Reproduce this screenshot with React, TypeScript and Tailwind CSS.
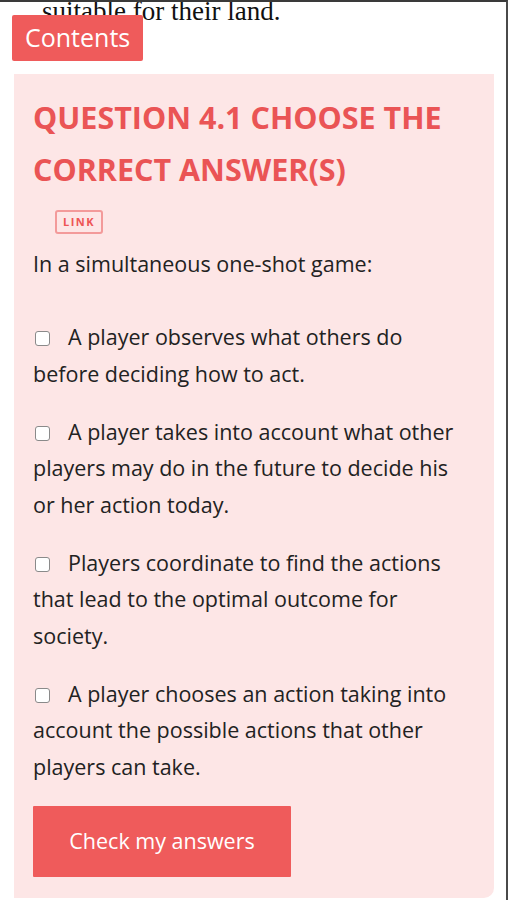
import React from "react";

const options = [
  "A player observes what others do before deciding how to act.",
  "A player takes into account what other players may do in the future to decide his or her action today.",
  "Players coordinate to find the actions that lead to the optimal outcome for society.",
  "A player chooses an action taking into account the possible actions that other players can take.",
];

export default function App() {
  return (
    <div className="relative w-[508px] h-[900px] overflow-hidden bg-white border-t-2 border-t-[#3a3a3a] border-r-2 border-r-[#4a4a4a] font-['Open_Sans',sans-serif]">
      <div className="pl-[42px] -mt-[9px] text-[27px] leading-[36px] text-[#111] font-['Liberation_Serif',serif]">
        suitable for their land.
      </div>
      <div className="absolute left-[12px] top-[13px] h-[46px] px-[13px] flex items-center rounded-[2px] bg-[#ef5b5b] text-white text-[25px]">
        Contents
      </div>
      <div className="ml-[14px] mt-[45px] w-[480px] h-[824px] rounded-br-[10px] bg-[#fde6e6] pl-[19px] pr-[34px] pt-[17px]">
        <h2 className="text-[#ea5455] font-bold text-[30.5px] leading-[52px] whitespace-nowrap">
          QUESTION 4.1 CHOOSE THE<br />CORRECT ANSWER(S)
        </h2>
        <div className="mt-[15px] ml-[22px] inline-flex items-center h-[24px] px-[6px] border-2 border-[#f39a9a] rounded-[3px] text-[#e55] text-[11px] font-bold tracking-[1.5px]">
          LINK
        </div>
        <p className="mt-[11px] text-[21.5px] leading-[37px] text-[#222]">In a simultaneous one-shot game:</p>
        <div className="mt-[37px] flex flex-col gap-[21.5px]">
          {options.map((o) => (
            <div key={o} className="text-[21.5px] leading-[36.5px] text-[#222]">
              <span className="inline-block align-[-1px] w-[15px] h-[15px] ml-[2px] mr-[18px] rounded-[3px] border border-[#8a8a8a] bg-white"></span>
              {o}
            </div>
          ))}
        </div>
        <div className="mt-[21px] w-[258px] h-[71px] flex items-center justify-center bg-[#ef5b5b] text-white text-[21.5px] rounded-[1px]">
          Check my answers
        </div>
      </div>
    </div>
  );
}
